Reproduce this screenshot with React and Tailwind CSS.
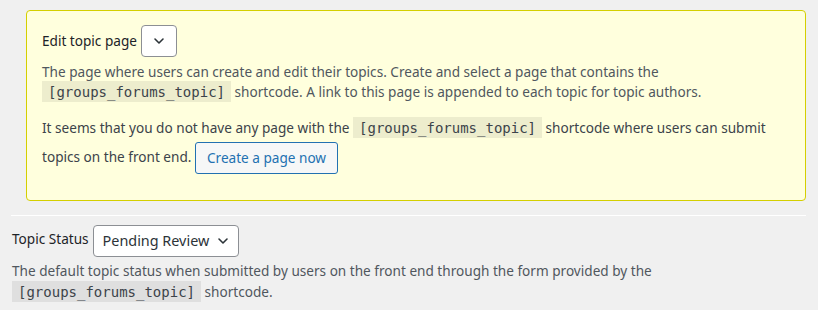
const sans = { fontFamily: '"Noto Sans", "Open Sans", sans-serif' }

function Code({ children }) {
  return (
    <code className="rounded-none bg-black/[0.07] px-[6px] pt-[3px] pb-[2px] font-['DejaVu_Sans_Mono',monospace] text-[14px] text-[#3c434a]">
      {children}
    </code>
  )
}

function Chevron({ className }) {
  return (
    <svg viewBox="0 0 16 16" className={className} fill="none" stroke="currentColor" strokeWidth="1.6" strokeLinecap="round" strokeLinejoin="round">
      <path d="M4 6l4 4 4-4" />
    </svg>
  )
}

export default function App() {
  return (
    <div className="h-[310px] w-[818px] overflow-hidden bg-[#f0f0f0] pl-[11px] pr-[12px] pt-[10px] text-[13.6px] text-[#3c434a]" style={sans}>
      <div className="ml-[15px] rounded-[4px] border border-[#d4cf00] bg-[#ffffdd] px-[15px] pt-[14px] pb-[26px]">
        <div className="flex items-center gap-[4px]">
          <span className="text-[#1d2327]">Edit topic page</span>
          <div className="flex h-[32px] w-[36px] items-center justify-center rounded-[4px] border border-[#8c8f94] bg-white text-[#2c3338]">
            <Chevron className="h-[16px] w-[16px]" />
          </div>
        </div>
        <p className="mt-[5px] leading-[20px] text-[#50575e]">
          The page where users can create and edit their topics. Create and select a page that contains the{' '}
          <Code>[groups_forums_topic]</Code> shortcode. A link to this page is appended to each topic for topic authors.
        </p>
        <p className="mt-[12px] leading-[28px] text-[#3c434a]">
          It seems that you do not have any page with the <Code>[groups_forums_topic]</Code> shortcode where users can submit topics on the front end.{' '}
          <button type="button" className="inline-flex h-[32px] items-center rounded-[3px] border border-[#2271b1] bg-[#f6f7f7] px-[11px] align-middle text-[13.6px] text-[#2271b1]">
            Create a page now
          </button>
        </p>
      </div>

      <div className="mt-[14px] border-t border-white pt-[9px]">
        <div className="flex items-center gap-[4px] pl-px">
          <span className="-mt-[4px] text-[#1d2327]">Topic Status</span>
          <div className="flex h-[32px] w-[146px] items-center justify-between rounded-[4px] border border-[#8c8f94] bg-white pl-[9px] pr-[7px] text-[14.4px] text-[#2c3338]">
            Pending Review
            <Chevron className="h-[16px] w-[16px]" />
          </div>
        </div>
        <p className="mt-[3px] pl-px leading-[21px] text-[#50575e]">
          The default topic status when submitted by users on the front end through the form provided by the <br />
          <Code>[groups_forums_topic]</Code> shortcode.
        </p>
      </div>
    </div>
  )
}
